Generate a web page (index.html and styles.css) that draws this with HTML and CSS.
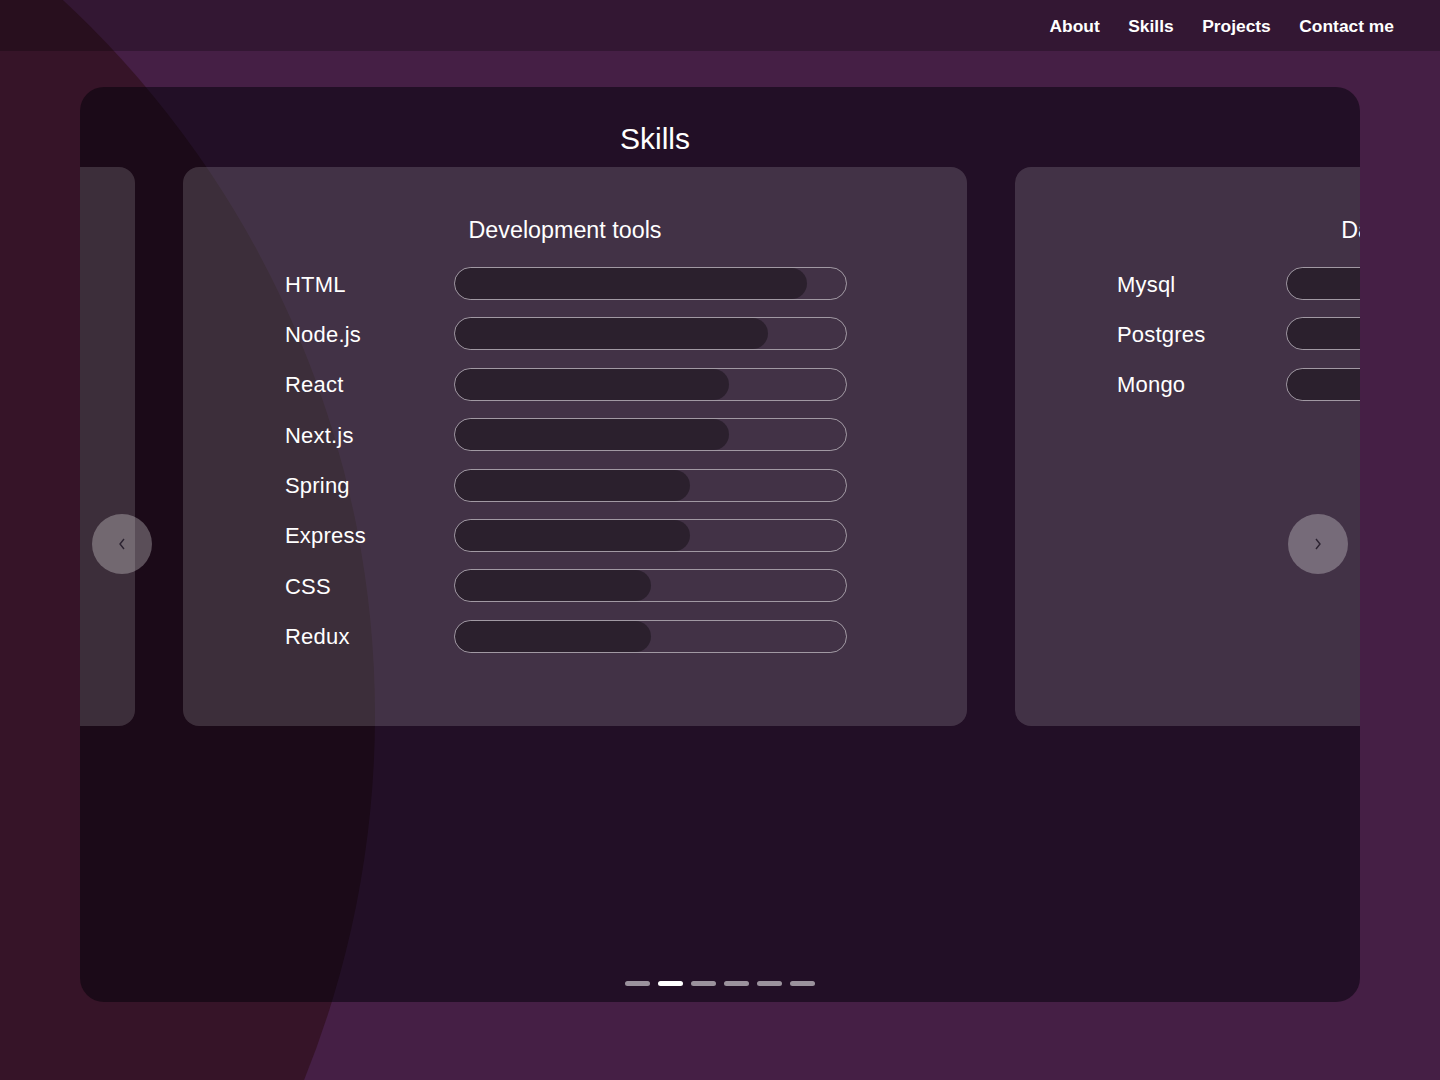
FILE: index.html
```html
<!DOCTYPE html>
<html lang="en">
<head>
<meta charset="utf-8">
<title>Skills</title>
<link rel="stylesheet" href="styles.css">
</head>
<body>
<div class="blob"></div>
<header class="nav">
  <a href="#about">About</a>
  <a href="#skills">Skills</a>
  <a href="#projects">Projects</a>
  <a href="#contact">Contact me</a>
</header>
<main class="page">
  <section class="card" id="skills">
    <h1 class="title">Skills</h1>
    <div class="carousel">
      <div class="track">
        <div class="slide" aria-hidden="true"></div>
        <div class="slide">
          <h2 class="slide-title">Development tools</h2>
          <div class="rows">
            <div class="row"><span class="label">HTML</span><div class="bar"><div class="fill" style="width:90%"></div></div></div>
            <div class="row"><span class="label">Node.js</span><div class="bar"><div class="fill" style="width:80%"></div></div></div>
            <div class="row"><span class="label">React</span><div class="bar"><div class="fill" style="width:70%"></div></div></div>
            <div class="row"><span class="label">Next.js</span><div class="bar"><div class="fill" style="width:70%"></div></div></div>
            <div class="row"><span class="label">Spring</span><div class="bar"><div class="fill" style="width:60%"></div></div></div>
            <div class="row"><span class="label">Express</span><div class="bar"><div class="fill" style="width:60%"></div></div></div>
            <div class="row"><span class="label">CSS</span><div class="bar"><div class="fill" style="width:50%"></div></div></div>
            <div class="row"><span class="label">Redux</span><div class="bar"><div class="fill" style="width:50%"></div></div></div>
          </div>
        </div>
        <div class="slide">
          <h2 class="slide-title">Databases</h2>
          <div class="rows">
            <div class="row"><span class="label">Mysql</span><div class="bar"><div class="fill" style="width:70%"></div></div></div>
            <div class="row"><span class="label">Postgres</span><div class="bar"><div class="fill" style="width:60%"></div></div></div>
            <div class="row"><span class="label">Mongo</span><div class="bar"><div class="fill" style="width:50%"></div></div></div>
          </div>
        </div>
      </div>
      <button class="arrow arrow-left" aria-label="Previous">
        <svg width="10" height="14" viewBox="0 0 10 14"><path d="M7 2 L3 7 L7 12" fill="none" stroke="#2b2230" stroke-width="1.4"/></svg>
      </button>
      <button class="arrow arrow-right" aria-label="Next">
        <svg width="10" height="14" viewBox="0 0 10 14"><path d="M3 2 L7 7 L3 12" fill="none" stroke="#2b2230" stroke-width="1.4"/></svg>
      </button>
    </div>
    <div class="dots">
      <span class="dot"></span>
      <span class="dot active"></span>
      <span class="dot"></span>
      <span class="dot"></span>
      <span class="dot"></span>
      <span class="dot"></span>
    </div>
  </section>
</main>
</body>
</html>
```

FILE: styles.css
```css
* { box-sizing: border-box; }

html {
  margin: 0;
  padding: 0;
  overflow: hidden;
  height: 1080px;
}

body {
  margin: 0;
  padding: 0;
  position: relative;
  width: 1440px;
  height: 1080px;
  overflow: hidden;
  background: #451f45;
  font-family: "Liberation Sans", Arial, sans-serif;
  color: #ffffff;
}

.blob {
  position: absolute;
  left: -1575px;
  top: -260px;
  width: 1950px;
  height: 1950px;
  border-radius: 50%;
  background: rgba(40, 10, 12, 0.5);
  z-index: 0;
}

.nav {
  position: relative;
  z-index: 1;
  height: 51px;
  display: flex;
  justify-content: flex-end;
  align-items: center;
  gap: 28.5px;
  padding: 2px 46px 0 0;
  background: rgba(0, 0, 0, 0.25);
}

.nav a {
  color: #ffffff;
  text-decoration: none;
  font-weight: 700;
  font-size: 17.4px;
}

.page {
  position: relative;
  z-index: 1;
  padding: 36px 80px 0 80px;
}

.card {
  height: 915px;
  border-radius: 24px;
  background: rgba(0, 0, 8, 0.5);
  display: flex;
  flex-direction: column;
  overflow: hidden;
}

.title {
  margin: 35px 0 11px 0;
  padding-right: 130px;
  height: 34px;
  line-height: 34px;
  text-align: center;
  font-size: 30px;
  font-weight: 400;
}

.carousel {
  position: relative;
  height: 559px;
  overflow: hidden;
}

.track {
  display: flex;
  gap: 48px;
  height: 100%;
  transform: translateX(-729px);
}

.slide {
  flex: 0 0 784px;
  height: 100%;
  border-radius: 16px;
  background: rgba(255, 255, 255, 0.15);
  padding: 50px 0 0 102px;
}

.slide-title {
  width: 560px;
  margin: 0 0 23px 0;
  text-align: center;
  font-size: 23.3px;
  font-weight: 400;
  line-height: 27px;
}

.rows {
  display: flex;
  flex-direction: column;
  gap: 17.4px;
}

.row {
  display: flex;
  align-items: center;
  height: 33px;
}

.label {
  width: 169px;
  font-size: 22px;
  letter-spacing: 0.2px;
  padding-top: 2px;
}

.bar {
  width: 393px;
  height: 33px;
  border: 1px solid rgba(255, 255, 255, 0.5);
  border-radius: 17px;
  overflow: hidden;
}

.fill {
  height: 100%;
  border-radius: 16px;
  background: rgba(0, 0, 0, 0.35);
}

.arrow {
  position: absolute;
  top: 347px;
  width: 60px;
  height: 60px;
  border: none;
  border-radius: 50%;
  background: rgba(255, 255, 255, 0.28);
  display: flex;
  align-items: center;
  justify-content: center;
  padding: 0;
  cursor: pointer;
}

.arrow-left { left: 12px; }
.arrow-right { right: 12px; }

.dots {
  margin-top: auto;
  margin-bottom: 16px;
  display: flex;
  justify-content: center;
  gap: 8px;
}

.dot {
  width: 25px;
  height: 5px;
  border-radius: 3px;
  background: rgba(255, 255, 255, 0.55);
}

.dot.active {
  background: #ffffff;
}
```
